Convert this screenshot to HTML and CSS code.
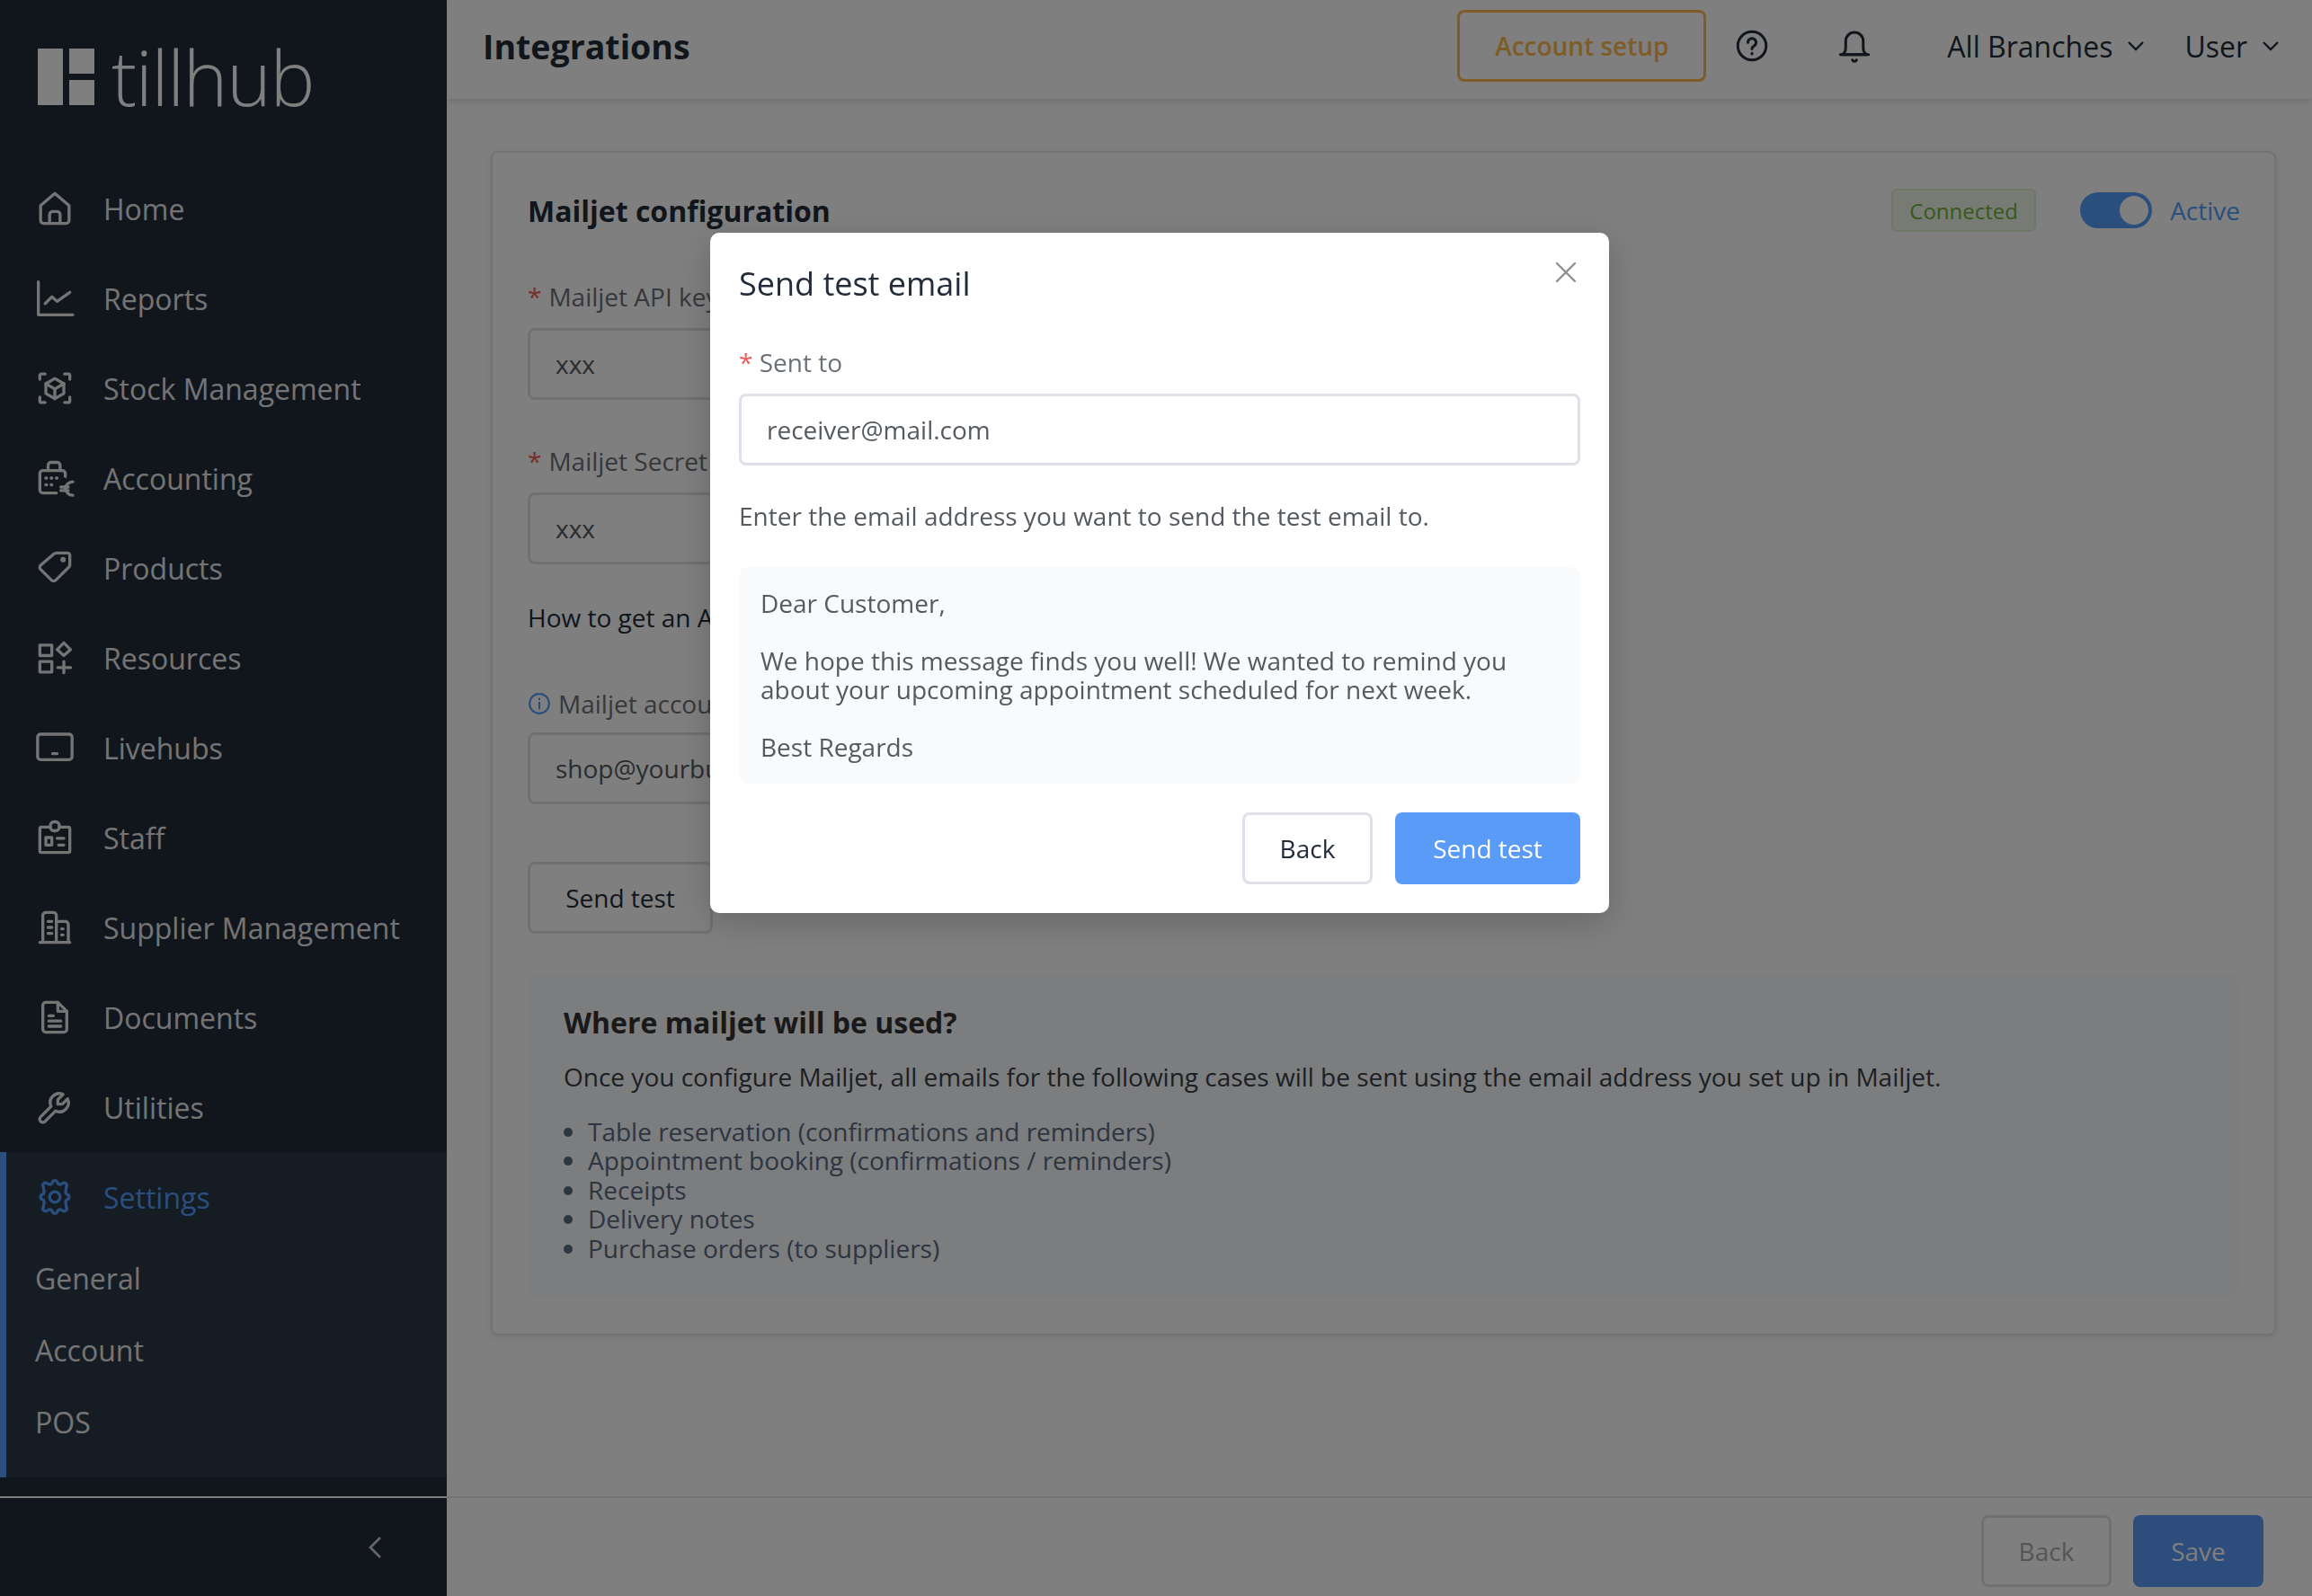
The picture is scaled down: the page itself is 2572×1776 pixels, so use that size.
FILE: index.html
```html
<!DOCTYPE html>
<html lang="en">
<head>
    <meta charset="UTF-8">
    <meta name="viewport" content="width=device-width, initial-scale=1.0">
    <title>Integrations</title>
    <link rel="stylesheet" href="styles.css">
</head>
<body>

    <aside class="sidebar">
        <div class="logo">
            <div class="logo-mark">
                <span class="logo-tall"></span>
                <span class="logo-stack"><span></span><span></span></span>
            </div>
            <span class="logo-text">tillhub</span>
        </div>

        <nav class="nav">
            <a class="nav-item">
                <svg class="nav-icon" viewBox="0 0 24 24"><path d="M2.500 10 12 2l9.500 8v10a2 2 0 0 1-2 2h-15a2 2 0 0 1-2-2z"/><path d="M8.500 22v-6a2 2 0 0 1 2-2h3a2 2 0 0 1 2 2v6"/></svg>
                Home
            </a>
            <a class="nav-item">
                <svg class="nav-icon" viewBox="0 0 24 24"><path d="M1 1v22h23"/><path d="M5.500 15.500 10 11l3.500 3L22 8"/></svg>
                Reports
            </a>
            <a class="nav-item">
                <svg class="nav-icon" viewBox="0 0 24 24"><path d="M2 6V3.500A1 1 0 0 1 3 2.500h2.500M18.500 2.500H21a1 1 0 0 1 1 1V6M22 18v2.500a1 1 0 0 1-1 1h-2.500M5.500 21.500H3a1 1 0 0 1-1-1V18"/><path d="M12 5.500 18 9v6.500L12 19l-6-3.500V9z"/><path d="m6 9 6 3.500L18 9M12 12.500V19"/></svg>
                Stock Management
            </a>
            <a class="nav-item">
                <svg class="nav-icon" viewBox="0 0 24 24"><path d="M7.500 7V3.500A2 2 0 0 1 9.500 1.500h4a2 2 0 0 1 2 2V7"/><path d="M13 22H4a2 2 0 0 1-2-2V9a2 2 0 0 1 2-2h13a2 2 0 0 1 2 2v2"/><path d="M6 12h.5M9.500 12h.5M13 12h.5M6 16.500h.5M9.500 16.500h.5"/><path d="M24 14.500a5 5 0 0 0-5 4.500 5 5 0 0 0 5 4.500M16 18h5M16 20.300h5"/></svg>
                Accounting
            </a>
            <a class="nav-item">
                <svg class="nav-icon" viewBox="0 0 24 24"><path d="M13 2h7.500A1.500 1.500 0 0 1 22 3.500V10a2 2 0 0 1-.6 1.400l-8.800 8.800a2 2 0 0 1-2.800 0L2.500 13a2 2 0 0 1 0-2.800l9-7.600A2 2 0 0 1 13 2z"/><circle cx="17.500" cy="6.500" r=".8"/></svg>
                Products
            </a>
            <a class="nav-item">
                <svg class="nav-icon" viewBox="0 0 24 24"><rect x="2" y="3.500" width="8" height="7"/><rect x="2" y="14.500" width="8" height="7"/><path d="m18 2 4.500 4.500L18 10.500l-4.500-4z"/><path d="M18 14.500v7.500M14 18.500h8.500"/></svg>
                Resources
            </a>
            <a class="nav-item">
                <svg class="nav-icon" viewBox="0 0 24 24"><rect x=".5" y="3" width="23" height="17" rx="2"/><path d="M10.500 16h3"/></svg>
                Livehubs
            </a>
            <a class="nav-item">
                <svg class="nav-icon" viewBox="0 0 24 24"><path d="M9 5H3a1 1 0 0 0-1 1v15a1 1 0 0 0 1 1h18a1 1 0 0 0 1-1V6a1 1 0 0 0-1-1h-6"/><rect x="9" y="1.500" width="6" height="6" rx="2.500"/><rect x="6" y="12" width="4" height="5"/><path d="M13.500 12.500H18M14.500 17H18"/></svg>
                Staff
            </a>
            <a class="nav-item">
                <svg class="nav-icon" viewBox="0 0 24 24"><path d="M2 22h20"/><path d="M4 22V4a2 2 0 0 1 2-2h5a2 2 0 0 1 2 2v18"/><path d="M13 8h6a2 2 0 0 1 2 2v12"/><path d="M7.500 8H10M7.500 12H10M7.500 16H10M16.500 13h1M16.500 17h1"/></svg>
                Supplier Management
            </a>
            <a class="nav-item">
                <svg class="nav-icon" viewBox="0 0 24 24"><path d="M14 2H6a2 2 0 0 0-2 2v16a2 2 0 0 0 2 2h12a2 2 0 0 0 2-2V8z"/><path d="M14 2v6h6"/><path d="M8 11h3M8 14.500h8M8 18h8"/></svg>
                Documents
            </a>
            <a class="nav-item">
                <svg class="nav-icon" viewBox="0 0 24 24"><path d="M17 10h-3V7l3.500-3.500a6 6 0 0 0-8 8l-7 7a2 2 0 0 0 3 3l7-7a6 6 0 0 0 8-8z"/></svg>
                Utilities
            </a>

            <div class="nav-group">
                <a class="nav-item nav-item-active">
                    <svg class="nav-icon" viewBox="0 0 24 24"><path d="M10.325 2.317c.426-1.756 2.924-1.756 3.350 0a1.724 1.724 0 0 0 2.573 1.066l1.100-.6c1.543-.94 3.310.826 2.370 2.370l-.600 3.600a1.724 1.724 0 0 0 1.065 1.572c1.756.426 1.756 2.924 0 3.350a1.724 1.724 0 0 0-1.066 1.573l.600 3.600c.94 1.543-.826 3.310-2.370 2.370l-1.100-.6a1.724 1.724 0 0 0-2.572 1.065c-.426 1.756-2.924 1.756-3.350 0a1.724 1.724 0 0 0-2.573-1.066l-1.100.6c-1.543.94-3.310-.826-2.370-2.370l.600-3.600a1.724 1.724 0 0 0-1.065-1.572c-1.756-.426-1.756-2.924 0-3.350a1.724 1.724 0 0 0 1.066-1.573l-.600-3.600c-.94-1.543.826-3.310 2.370-2.370l1.100.6c1 .608 2.296.07 2.572-1.065z"/><circle cx="12" cy="12" r="3.500"/></svg>
                    Settings
                </a>
                <a class="sub-item">General</a>
                <a class="sub-item">Account</a>
                <a class="sub-item">POS</a>
            </div>
        </nav>

        <div class="sidebar-footer">
            <svg class="collapse-icon" viewBox="0 0 14 24"><path d="M13 1 2 12l11 11"/></svg>
        </div>
    </aside>

    <main class="main">
        <header class="topbar">
            <h1 class="page-title">Integrations</h1>
            <button class="btn btn-setup">Account setup</button>
            <svg class="top-icon help-icon" viewBox="0 0 24 24"><circle cx="12" cy="12" r="10.500"/><path d="M9 9.500a3 3 0 1 1 4.500 2.600c-1 .6-1.500 1.200-1.500 2.200"/><path d="M12 17.500v.5"/></svg>
            <svg class="top-icon bell-icon" viewBox="0 0 24 24"><path d="M3 18.500c1.500-1 2.500-2.500 2.500-5V8.500a6.500 6.500 0 0 1 13 0v5c0 2.500 1 4 2.500 5z"/><path d="M1.500 18.500h21M10.500 22.500a1.600 1.600 0 0 0 3 0"/></svg>
            <span class="top-menu branches-menu">All Branches</span>
            <svg class="chevron" viewBox="0 0 20 12"><path d="m2 2 8 8 8-8"/></svg>
            <span class="top-menu user-menu">User</span>
            <svg class="chevron" viewBox="0 0 20 12"><path d="m2 2 8 8 8-8"/></svg>
        </header>

        <div class="content">
            <section class="card">
                <div class="card-head">
                    <h2 class="card-title">Mailjet configuration</h2>
                    <span class="badge">Connected</span>
                    <span class="toggle"><span class="toggle-knob"></span></span>
                    <span class="toggle-label">Active</span>
                </div>

                <label class="field-label label-api"><span class="req">*</span> Mailjet API key</label>
                <div class="input">xxx</div>

                <label class="field-label label-secret"><span class="req">*</span> Mailjet Secret Key</label>
                <div class="input">xxx</div>

                <p class="how-to">How to get an API key?</p>

                <label class="field-label label-account">
                    <svg class="info-icon" viewBox="0 0 24 24"><circle cx="12" cy="12" r="10"/><path d="M12 11v6M12 7v.5"/></svg>
                    Mailjet account email
                </label>
                <div class="input input-account">shop@yourbusiness.com</div>

                <button class="btn btn-plain">Send test</button>

                <div class="panel">
                    <h3 class="panel-title">Where mailjet will be used?</h3>
                    <p class="panel-text">Once you configure Mailjet, all emails for the following cases will be sent using the email address you set up in Mailjet.</p>
                    <ul class="panel-list">
                        <li>Table reservation (confirmations and reminders)</li>
                        <li>Appointment booking (confirmations / reminders)</li>
                        <li>Receipts</li>
                        <li>Delivery notes</li>
                        <li>Purchase orders (to suppliers)</li>
                    </ul>
                </div>
            </section>
        </div>

        <footer class="main-footer">
            <button class="btn btn-muted">Back</button>
            <button class="btn btn-primary">Save</button>
        </footer>
    </main>

    <div class="overlay">
        <div class="modal">
            <div class="modal-head">
                <h2 class="modal-title">Send test email</h2>
                <svg class="close-icon" viewBox="0 0 24 24"><path d="M2 2l20 20M22 2 2 22"/></svg>
            </div>
            <label class="modal-label"><span class="req">*</span> Sent to</label>
            <div class="modal-input">receiver@mail.com</div>
            <p class="modal-help">Enter the email address you want to send the test email to.</p>
            <div class="preview">
                <p>Dear Customer,</p>
                <p>We hope this message finds you well! We wanted to remind you about your upcoming appointment scheduled for next week.</p>
                <p>Best Regards</p>
            </div>
            <div class="modal-actions">
                <button class="btn btn-back">Back</button>
                <button class="btn btn-send">Send test</button>
            </div>
        </div>
    </div>

</body>
</html>
```

FILE: styles.css
```css
* {
    box-sizing: border-box;
}

body {
    margin: 0;
    height: 100vh;
    display: flex;
    overflow: hidden;
    font-family: "Open Sans", "Liberation Sans", sans-serif;
    font-size: 28px;
    background-color: white;
    color: #222c3a;
}

h1, h2, h3, p, ul {
    margin: 0;
}

/* sidebar */
.sidebar {
    width: 497px;
    flex-shrink: 0;
    display: flex;
    flex-direction: column;
    background-color: #222c3a;
    color: #e8e9eb;
}

.logo {
    height: 182px;
    padding: 54px 0 0 42px;
    display: flex;
    align-items: flex-start;
}

.logo-mark {
    display: flex;
    gap: 7px;
    width: 63px;
    height: 63px;
}

.logo-tall {
    width: 28px;
    background-color: white;
}

.logo-stack {
    width: 28px;
    display: flex;
    flex-direction: column;
    justify-content: space-between;
}

.logo-stack span {
    height: 28px;
    background-color: white;
}

.logo-text {
    margin: -25px 0 0 19px;
    font-size: 84px;
    font-weight: 300;
    line-height: 114px;
    letter-spacing: -1.300px;
    color: white;
}

.nav-item {
    height: 100px;
    padding-left: 39px;
    display: flex;
    align-items: center;
    font-size: 32px;
}

.nav-icon {
    width: 44px;
    height: 40px;
    margin-right: 32px;
    overflow: visible;
    fill: none;
    stroke: currentColor;
    stroke-width: 2;
    stroke-linecap: round;
    stroke-linejoin: round;
}

.nav-group {
    height: 362px;
    border-left: 7px solid #549efa;
    background-color: #2a3848;
}

.nav-item-active {
    padding-left: 32px;
    color: #549efa;
}

.sub-item {
    height: 80px;
    padding-left: 32px;
    display: flex;
    align-items: center;
    font-size: 32px;
}

.sidebar-footer {
    margin-top: auto;
    height: 111px;
    border-top: 2px solid white;
    display: flex;
    align-items: center;
    justify-content: flex-end;
    padding-right: 73px;
}

.collapse-icon {
    width: 14px;
    height: 24px;
    fill: none;
    stroke: #d0d0d0;
    stroke-width: 2.600;
}

/* main */
.main {
    flex: 1;
    min-width: 0;
    display: flex;
    flex-direction: column;
}

.topbar {
    height: 110px;
    padding: 0 36px 8px 40px;
    display: flex;
    align-items: center;
    box-shadow: 0 2px 8px rgba(0, 0, 0, 0.15);
    flex-shrink: 0;
}

.page-title {
    font-size: 37.500px;
    font-weight: 700;
}

.btn {
    height: 80px;
    border-radius: 8px;
    font-family: inherit;
    font-size: 28px;
    background-color: white;
    border: 3px solid #dfe0e8;
}

.btn-setup {
    margin-left: auto;
    width: 277px;
    border: 3px solid #ffb84a;
    color: #ffb84a;
    font-weight: 600;
}

.top-icon {
    width: 36px;
    height: 36px;
    overflow: visible;
    fill: none;
    stroke: #222c3a;
    stroke-width: 2;
    stroke-linecap: round;
    stroke-linejoin: round;
}

.help-icon {
    margin-left: 33px;
}

.bell-icon {
    margin-left: 78px;
}

.top-menu {
    font-size: 32px;
}

.branches-menu {
    margin-left: 85px;
}

.user-menu {
    margin-left: 44px;
}

.chevron {
    width: 20px;
    height: 12px;
    margin-left: 16px;
    fill: none;
    stroke: #222c3a;
    stroke-width: 2.400;
}

.content {
    flex: 1;
    padding: 58px 40px 0 49px;
}

.card {
    height: 1318px;
    padding: 40px 38px 0 39px;
    border: 2px solid #e4e5ee;
    border-radius: 8px;
    box-shadow: 0 2px 8px rgba(0, 0, 0, 0.1);
}

.card-head {
    height: 48px;
    display: flex;
    align-items: center;
}

.card-title {
    margin-right: auto;
    font-size: 32px;
    font-weight: 700;
}

.badge {
    width: 161px;
    height: 48px;
    display: flex;
    align-items: center;
    justify-content: center;
    border: 2px solid #dcecd0;
    border-radius: 6px;
    background-color: #eef7e6;
    color: #6fb33b;
    font-size: 24px;
}

.toggle {
    width: 80px;
    height: 40px;
    margin-left: 49px;
    padding: 4px;
    display: flex;
    justify-content: flex-end;
    border-radius: 20px;
    background-color: #549efa;
}

.toggle-knob {
    width: 32px;
    height: 32px;
    border-radius: 50%;
    background-color: white;
}

.toggle-label {
    margin-left: 20px;
    color: #549efa;
}

.field-label {
    display: flex;
    align-items: center;
    gap: 8px;
    line-height: 32px;
    color: #6b7078;
}

.label-api {
    margin: 56px 0 19px;
}

.label-secret {
    margin: 52px 0 19px;
}

.label-account {
    margin: 64px 0 16px;
}

.req {
    color: #f05a5a;
}

.input {
    width: 720px;
    height: 80px;
    padding-left: 28px;
    display: flex;
    align-items: center;
    border: 3px solid #dfe0e8;
    border-radius: 8px;
    color: #555a60;
}

.how-to {
    margin-top: 43px;
    line-height: 32px;
}

.info-icon {
    width: 26px;
    height: 26px;
    fill: none;
    stroke: #549efa;
    stroke-width: 2;
    stroke-linecap: round;
}

.btn-plain {
    display: block;
    width: 206px;
    margin-top: 64px;
    color: #222c3a;
}

.panel {
    height: 361px;
    margin: 44px 2px 0 0;
    padding: 35px 40px 0;
    border-radius: 12px;
    background-color: #f8fafe;
}

.panel-title {
    font-size: 32px;
    font-weight: 700;
    line-height: 40px;
    color: #333;
}

.panel-text {
    margin-top: 24px;
    line-height: 32px;
    color: #3a4047;
}

.panel-list {
    margin-top: 29px;
    padding-left: 27px;
    line-height: 32.400px;
    color: #5b6a82;
}

.main-footer {
    height: 111px;
    padding: 19px 54px 0 0;
    display: flex;
    justify-content: flex-end;
    gap: 24px;
    border-top: 2px solid #e4e5ee;
    flex-shrink: 0;
}

.btn-muted {
    width: 145px;
    color: #aaacb0;
}

.btn-primary {
    width: 145px;
    border: none;
    background-color: #5a9af8;
    color: white;
}

/* dialog */
.overlay {
    position: fixed;
    top: 0;
    right: 0;
    bottom: 0;
    left: 0;
    background-color: rgba(0, 0, 0, 0.5);
}

.modal {
    width: 1000px;
    height: 757px;
    margin: 259px 0 0 790px;
    padding: 32px;
    border-radius: 10px;
    background-color: white;
    box-shadow: 0 10px 40px rgba(0, 0, 0, 0.2);
}

.modal-head {
    display: flex;
    justify-content: space-between;
    align-items: flex-start;
}

.modal-title {
    font-size: 36px;
    font-weight: 400;
    line-height: 50px;
}

.close-icon {
    width: 24px;
    height: 24px;
    margin: 0 4px 0 0;
    fill: none;
    stroke: #8d8f94;
    stroke-width: 2.400;
    stroke-linecap: round;
}

.modal-label {
    display: block;
    margin-top: 46px;
    line-height: 32px;
    color: #6b7078;
}

.modal-input {
    height: 80px;
    margin-top: 19px;
    padding-left: 28px;
    display: flex;
    align-items: center;
    border: 3px solid #dfe0e8;
    border-radius: 8px;
    color: #555a60;
}

.modal-help {
    margin-top: 40px;
    line-height: 32px;
    color: #555a60;
}

.preview {
    height: 241px;
    margin-top: 41px;
    padding: 24px 24px;
    border-radius: 10px;
    background-color: #f9fafc;
    line-height: 32px;
    color: #555a60;
}

.preview p + p {
    margin-top: 32px;
}

.modal-actions {
    margin-top: 32px;
    display: flex;
    justify-content: flex-end;
    gap: 25px;
}

.btn-back {
    width: 145px;
    color: #222c3a;
}

.btn-send {
    width: 206px;
    border: none;
    background-color: #5b9bf8;
    color: white;
}
```
